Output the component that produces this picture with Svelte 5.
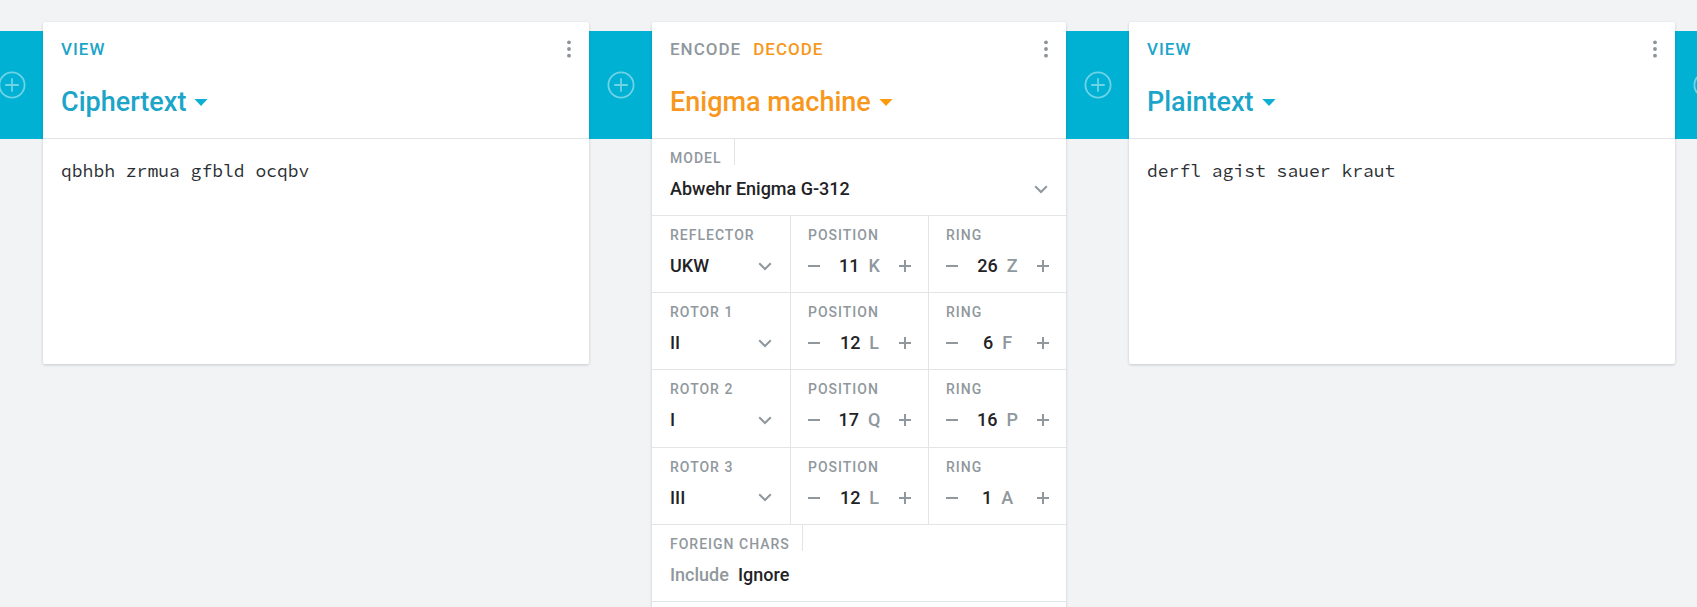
<script>
  let model = $state('Abwehr Enigma G-312');
  let foreign = $state('Ignore');
  let direction = $state('decode');
  let ciphertext = $state('qbhbh zrmua gfbld ocqbv');
  let plaintext = $state('derfl agist sauer kraut');

  let rotors = $state([
    { name: 'Reflector', wheel: 'UKW', options: ['UKW'], position: 11, ring: 26 },
    { name: 'Rotor 1', wheel: 'II', options: ['I', 'II', 'III'], position: 12, ring: 6 },
    { name: 'Rotor 2', wheel: 'I', options: ['I', 'II', 'III'], position: 17, ring: 16 },
    { name: 'Rotor 3', wheel: 'III', options: ['I', 'II', 'III'], position: 12, ring: 1 }
  ]);

  const letter = (n) => String.fromCharCode(64 + Number(n));
  const step = (rotor, key, by) => {
    rotor[key] = ((Number(rotor[key]) - 1 + by + 26) % 26) + 1;
  };
</script>

{#snippet connector()}
  <div class="connector">
    <button class="add" aria-label="Add brick">
      <svg width="28" height="28" viewBox="0 0 28 28" fill="none" stroke="currentColor" stroke-width="1.8">
        <circle cx="14" cy="14" r="12.6" />
        <path d="M14 7.2v13.6M7.2 14h13.6" />
      </svg>
    </button>
  </div>
{/snippet}

{#snippet menu()}
  <button class="menu" aria-label="Options">
    <svg width="4" height="18" viewBox="0 0 4 18" fill="currentColor">
      <circle cx="2" cy="2.3" r="1.9" />
      <circle cx="2" cy="9" r="1.9" />
      <circle cx="2" cy="15.7" r="1.9" />
    </svg>
  </button>
{/snippet}

{#snippet title(text)}
  <h2>
    <button class="title">
      {text}
      <svg width="14" height="7" viewBox="0 0 14 7" fill="currentColor"><path d="M.4 0h13.2L7 7z" /></svg>
    </button>
  </h2>
{/snippet}

{#snippet chevron()}
  <svg class="chevron" width="14" height="9" viewBox="0 0 14 9" fill="none" stroke="currentColor" stroke-width="2">
    <path d="M1.2 1.2 7 7l5.800-5.800" />
  </svg>
{/snippet}

{#snippet viewer(name)}
  <section class="card view">
    <header>
      <div class="tabs">
        <button class="tab active">View</button>
        {@render menu()}
      </div>
      {@render title(name)}
    </header>
    {#if name === 'Ciphertext'}
      <textarea aria-label={name} spellcheck="false" bind:value={ciphertext}></textarea>
    {:else}
      <textarea aria-label={name} spellcheck="false" bind:value={plaintext}></textarea>
    {/if}
  </section>
{/snippet}

{#snippet stepper(rotor, key, label, id)}
  <div class="cell">
    <label class="label" for={id}>{label}</label>
    <div class="stepper">
      <button aria-label="Decrease {label}" onclick={() => step(rotor, key, -1)}>
        <svg width="12" height="12" viewBox="0 0 12 12" stroke="currentColor" stroke-width="2"><path d="M0 6h12" /></svg>
      </button>
      <span class="number">
        <input {id} inputmode="numeric" style:width="{String(rotor[key]).length}ch" bind:value={rotor[key]} />
        <span>{letter(rotor[key])}</span>
      </span>
      <button aria-label="Increase {label}" onclick={() => step(rotor, key, 1)}>
        <svg width="12" height="12" viewBox="0 0 12 12" stroke="currentColor" stroke-width="2"><path d="M0 6h12M6 0v12" /></svg>
      </button>
    </div>
  </div>
{/snippet}

<main>
  <div class="pipe">
    {@render connector()}
    {@render viewer('Ciphertext')}
    {@render connector()}

    <section class="card machine">
      <header>
        <div class="tabs">
          <button class="tab" class:active={direction === 'encode'} onclick={() => (direction = 'encode')}>Encode</button>
          <button class="tab" class:active={direction === 'decode'} onclick={() => (direction = 'decode')}>Decode</button>
          {@render menu()}
        </div>
        {@render title('Enigma machine')}
      </header>

      <div class="settings">
        <div class="row">
          <div class="cell wide">
            <label class="label" for="model">Model</label>
            <div class="choice">
              <select id="model" bind:value={model}>
                <option>Abwehr Enigma G-312</option>
              </select>
              {@render chevron()}
            </div>
          </div>
        </div>

        {#each rotors as rotor, i}
          <div class="row thirds">
            <div class="cell">
              <label class="label" for="wheel-{i}">{rotor.name}</label>
              <div class="choice">
                <select id="wheel-{i}" bind:value={rotor.wheel}>
                  {#each rotor.options as option}
                    <option>{option}</option>
                  {/each}
                </select>
                {@render chevron()}
              </div>
            </div>
            {@render stepper(rotor, 'position', 'Position', `position-${i}`)}
            {@render stepper(rotor, 'ring', 'Ring', `ring-${i}`)}
          </div>
        {/each}

        <div class="row">
          <div class="cell wide" role="radiogroup" aria-labelledby="foreign">
            <span class="label" id="foreign">Foreign Chars</span>
            <div class="radios">
              {#each ['Include', 'Ignore'] as option}
                <label class:checked={foreign === option}>
                  <input type="radio" name="foreign" value={option} bind:group={foreign} />{option}
                </label>
              {/each}
            </div>
          </div>
        </div>
      </div>
    </section>

    {@render connector()}
    {@render viewer('Plaintext')}
    {@render connector()}
  </div>
</main>

<style>
  :global(body) {
    background: #f2f3f5;
  }

  main {
    height: 100vh;
    overflow: hidden;
    font-family: Roboto, "Liberation Sans", sans-serif;
    font-weight: 500;
    color: #1f2326;
  }

  button,
  input,
  select {
    font: inherit;
    color: inherit;
    background: none;
    border: 0;
    margin: 0;
    padding: 0;
  }

  button,
  select {
    cursor: pointer;
  }

  svg {
    display: block;
  }

  .pipe {
    display: flex;
    align-items: flex-start;
    margin: 0 -41px 0 -20px;
    padding-top: 22px;
  }

  .connector {
    flex: 0 0 63px;
    height: 108px;
    margin-top: 9px;
    display: grid;
    place-items: center;
    background: #00b1d4;
  }

  .add {
    color: #6fd3e6;
  }

  .card {
    position: relative;
    background: #fff;
    border-radius: 2px;
    box-shadow: 0 1px 3px rgba(20, 30, 40, 0.2);
  }

  .view {
    --accent: #1ca5c9;
    --caret: #0cb0d2;
    flex: 1 1 0;
    min-width: 0;
  }

  .machine {
    --accent: #f7981d;
    --caret: #fb9a0c;
    flex: 0 0 414px;
    padding-bottom: 78px;
  }

  header {
    padding: 15px 18px 20px;
    border-bottom: 1px solid #e1e5e8;
  }

  .tabs {
    display: flex;
    align-items: center;
    gap: 12px;
    height: 24px;
    margin-bottom: 25px;
  }

  .tab {
    font-size: 17px;
    line-height: 24px;
    letter-spacing: 1px;
    text-transform: uppercase;
    color: #90989d;
  }

  .tab.active {
    color: var(--accent);
  }

  .menu {
    margin-left: auto;
    color: #8d9499;
  }

  h2 {
    margin: 0;
    font: inherit;
  }

  .title {
    display: flex;
    align-items: center;
    gap: 8px;
    font-size: 27px;
    line-height: 32px;
    color: var(--accent);
  }

  .title svg {
    color: var(--caret);
  }

  textarea {
    display: block;
    box-sizing: border-box;
    width: 100%;
    height: 225px;
    padding: 18px;
    border: 0;
    outline: 0;
    resize: none;
    background: none;
    color: #2b2f33;
    font: 400 18px/27px "Source Code Pro", "Liberation Mono", monospace;
  }

  .settings {
    display: grid;
    grid-auto-rows: 1fr;
    min-height: 463px;
  }

  .row {
    border-bottom: 1px solid #e1e5e8;
  }

  .thirds {
    display: grid;
    grid-template-columns: repeat(3, 1fr);
  }

  .cell {
    display: flex;
    flex-direction: column;
    align-items: flex-start;
    gap: 12px;
    padding: 0 18px;
    font-size: 18px;
    line-height: 24px;
  }

  .cell + .cell {
    border-left: 1px solid #e1e5e8;
    padding: 0 17px;
  }

  .label {
    padding-top: 12px;
    font-size: 14px;
    line-height: 14px;
    letter-spacing: 1px;
    text-transform: uppercase;
    color: #90989d;
  }

  .wide .label {
    padding-right: 12px;
    border-right: 1px solid #e1e5e8;
  }

  .choice {
    display: grid;
    align-items: center;
    width: 100%;
  }

  .choice > :global(*) {
    grid-area: 1 / 1;
  }

  select {
    appearance: none;
    width: 100%;
    height: 24px;
    outline: 0;
  }

  .chevron {
    justify-self: end;
    pointer-events: none;
    color: #90989d;
  }

  .stepper {
    display: flex;
    align-items: center;
    justify-content: space-between;
    width: 100%;
    color: #90989d;
  }

  .number {
    display: flex;
    gap: 9px;
  }

  .number input {
    height: 24px;
    outline: 0;
    color: #1f2326;
  }

  .radios {
    display: flex;
    gap: 9px;
    color: #90989d;
  }

  .radios .checked {
    color: #1f2326;
  }

  .radios input {
    position: absolute;
    opacity: 0;
    pointer-events: none;
  }
</style>
